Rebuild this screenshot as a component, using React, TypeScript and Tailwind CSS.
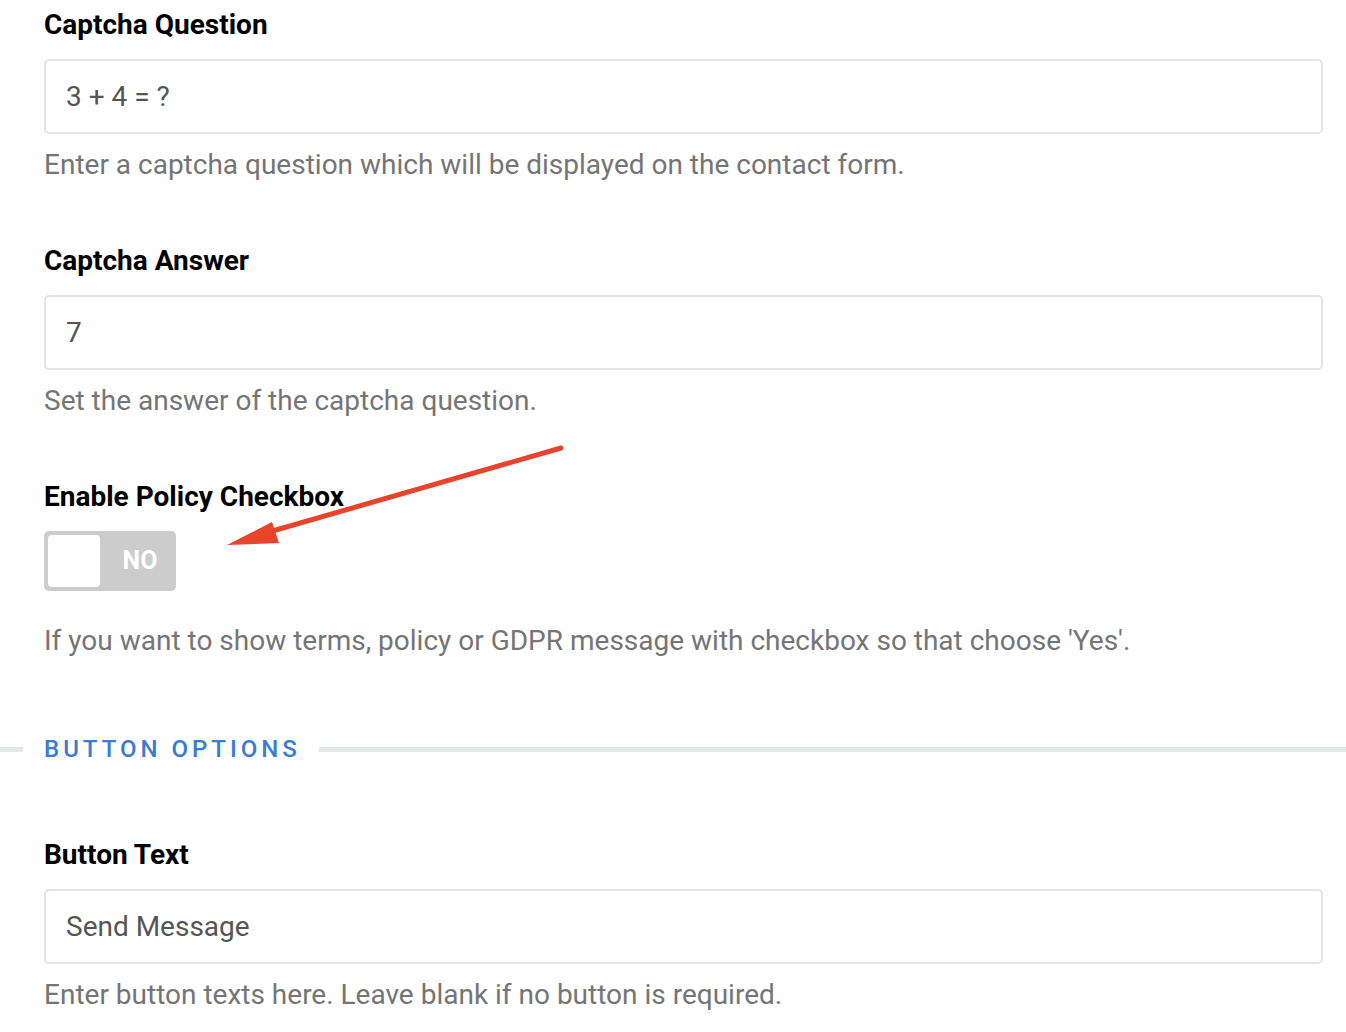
import React from "react";

const Field = ({
  label,
  value,
  help,
  first,
}: {
  label: string;
  value: string;
  help: string;
  first?: boolean;
}) => {
  return (
    <div className={first ? "pt-[9px]" : "mt-[62px]"}>
      <p className="text-[28px] leading-[32px] font-bold text-black">{label}</p>
      <div className="mt-[18px] h-[75px] border-2 border-[#e4e4e4] rounded-[5px] bg-white flex items-center px-[20px]">
        <span className="text-[28px] text-[#555555]">{value}</span>
      </div>
      <p className="mt-[13px] text-[28px] leading-[36px] text-[#757575]">{help}</p>
    </div>
  );
};

const Arrow = () => (
  <svg
    className="absolute left-0 top-0 pointer-events-none"
    width="600"
    height="600"
    viewBox="0 0 600 600"
  >
    <line
      x1="561"
      y1="448"
      x2="262"
      y2="534"
      stroke="#e8432b"
      strokeWidth="5"
      strokeLinecap="round"
    />
    <polygon points="227,545 272,522 279,543" fill="#e8432b" />
  </svg>
);

export default function App() {
  return (
    <div
      className="relative w-[1346px] h-[1032px] bg-white overflow-hidden"
      style={{ fontFamily: "Roboto, 'Liberation Sans', sans-serif" }}
    >
      <div className="pl-[44px] pr-[23px]">
        <Field
          first
          label="Captcha Question"
          value="3 + 4 = ?"
          help="Enter a captcha question which will be displayed on the contact form."
        />
        <Field
          label="Captcha Answer"
          value="7"
          help="Set the answer of the captcha question."
        />

        <div className="mt-[62px]">
          <p className="text-[28px] leading-[32px] font-bold text-black">
            Enable Policy Checkbox
          </p>
          <div className="mt-[18px] w-[132px] h-[60px] rounded-[5px] bg-[#cccccc] flex items-center p-[4px]">
            <div className="w-[52px] h-[52px] rounded-[4px] bg-white" />
            <span className="flex-1 pl-[8px] text-center text-[25px] font-bold text-white">
              NO
            </span>
          </div>
          <p className="mt-[32px] text-[28px] leading-[36px] text-[#757575]">
            If you want to show terms, policy or GDPR message with checkbox so that choose 'Yes'.
          </p>
        </div>
      </div>

      <div className="mt-[75px] flex items-center h-[30px]">
        <div className="w-[23px] h-[5px] bg-[#e6e7e9]" />
        <span className="ml-[21px] text-[24px] font-medium tracking-[4px] text-[#3a7bd5]">
          BUTTON OPTIONS
        </span>
        <div className="ml-[18px] flex-1 h-[5px] bg-[#e6e7e9]" />
      </div>

      <div className="pl-[44px] pr-[23px]">
        <div className="mt-[75px]">
          <p className="text-[28px] leading-[32px] font-bold text-black">Button Text</p>
          <div className="mt-[18px] h-[75px] border-2 border-[#e4e4e4] rounded-[5px] bg-white flex items-center px-[20px]">
            <span className="text-[28px] text-[#555555]">Send Message</span>
          </div>
          <p className="mt-[13px] text-[28px] leading-[36px] text-[#757575]">
            Enter button texts here. Leave blank if no button is required.
          </p>
        </div>
      </div>

      <Arrow />
    </div>
  );
}
